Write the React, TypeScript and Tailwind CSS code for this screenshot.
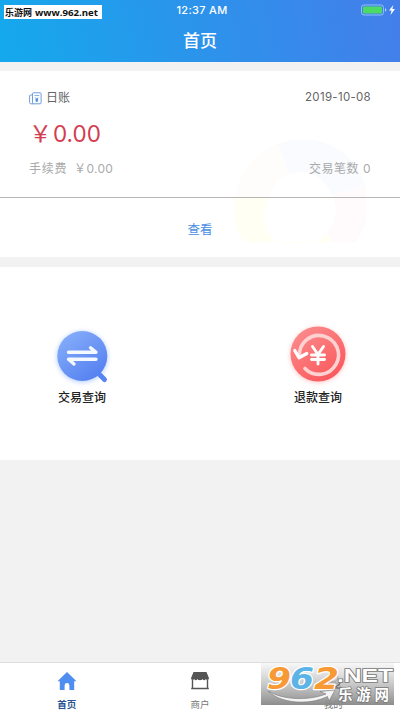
import type { ReactNode } from 'react';

function BatteryIcon() {
  return (
    <svg width="38" height="12" viewBox="0 0 38 12" fill="none">
      <rect x="1.5" y="1" width="22" height="10" rx="2.5" stroke="#a9d6fb" strokeOpacity="0.75" />
      <rect x="3" y="2.5" width="19" height="7" rx="1.2" fill="#4cd964" />
      <path d="M25 4.300v3.400c1-.4 1.300-1 1.300-1.700s-.3-1.300-1.300-1.700z" fill="#a9d6fb" />
      <path d="M33.300 1l-4.300 5.600h2.500l-1 4.400 4.500-5.900h-2.600z" fill="#fff" />
    </svg>
  );
}

function LedgerIcon() {
  return (
    <svg width="13" height="13" viewBox="0 0 13 13" fill="none" stroke="#6c9fdc">
      <rect x="3.500" y="0.800" width="8.600" height="11" rx="1" />
      <path d="M3.500 3H1.600a1 1 0 0 0-1 1v6.600c0 .8.500 1.200 1.200 1.200H5" />
      <path d="M5.500 3.500h4.800" strokeWidth="0.800" />
      <path d="M6.400 5.600l1.400 1.700 1.400-1.700M7.800 7.300v2.800M6.400 7.700h2.800M6.400 8.900h2.800" stroke="#3f80d0" strokeWidth="0.900" />
    </svg>
  );
}

function DonutBackdrop() {
  return (
    <svg className="absolute left-[234px] top-[69px]" width="132" height="103" viewBox="234 140 132 103">
      <path d="M278 144A65 65 0 0 1 365 185L332 196A33 33 0 0 0 289 174Z" fill="#f9fbff" />
      <path d="M365 185A65 65 0 0 1 356 242H333L327 233A32 32 0 0 0 332 196Z" fill="#fffbfc" />
      <path d="M333 242H244A65 65 0 0 1 235 197H269A32 32 0 0 0 327 233Z" fill="#fffff3" />
      <path d="M235 197A65 65 0 0 1 278 144L289 174A33 33 0 0 0 269 197Z" fill="#fffdfc" />
    </svg>
  );
}

function TradeIcon() {
  return (
    <svg width="64" height="64" viewBox="0 0 64 64" fill="none">
      <defs>
        <linearGradient id="trade" x1="14" y1="10" x2="48" y2="56" gradientUnits="userSpaceOnUse">
          <stop stopColor="#86adfa" />
          <stop offset="1" stopColor="#5480f0" />
        </linearGradient>
        <filter id="tradeGlow" x="-20%" y="-20%" width="140%" height="140%">
          <feGaussianBlur stdDeviation="2" />
        </filter>
      </defs>
      <circle cx="32.300" cy="34" r="26" fill="#8eb2ff" opacity="0.500" filter="url(#tradeGlow)" />
      <path d="M46 48l8.500 8.500" stroke="#5684f2" strokeWidth="5" strokeLinecap="round" />
      <circle cx="32.300" cy="33" r="25" fill="url(#trade)" />
      <g stroke="#f4f8ff" strokeWidth="3.400" strokeLinecap="round" strokeLinejoin="round">
        <path d="M18.500 29.300H46l-5.500-4.500" />
        <path d="M46 36.300H18.500l5.500 4.700" />
      </g>
    </svg>
  );
}

function RefundIcon() {
  return (
    <svg width="64" height="64" viewBox="0 0 64 64" fill="none">
      <defs>
        <linearGradient id="refund" x1="12" y1="8" x2="46" y2="58" gradientUnits="userSpaceOnUse">
          <stop stopColor="#fb8a8b" />
          <stop offset="1" stopColor="#fb585c" />
        </linearGradient>
        <filter id="refundGlow" x="-20%" y="-20%" width="140%" height="140%">
          <feGaussianBlur stdDeviation="2" />
        </filter>
      </defs>
      <circle cx="32" cy="32" r="28" fill="#ff9a9d" opacity="0.500" filter="url(#refundGlow)" />
      <circle cx="32" cy="31" r="27.500" fill="url(#refund)" />
      <path d="M13.500 33A19.500 19.500 0 1 1 19 45.500" stroke="#ffd2d2" strokeWidth="3.600" strokeLinecap="round" />
      <path d="M8.800 27.500l4.200 7.200 7.800-4.200" stroke="#fff" strokeWidth="3.300" strokeLinecap="round" strokeLinejoin="round" />
      <path d="M26.500 23.500l5.500 8 5.500-8M32 31.500v9.500M25.500 32h13M25.500 36.500h13" stroke="#fff" strokeWidth="2.900" strokeLinecap="round" strokeLinejoin="round" />
    </svg>
  );
}

function HomeIcon() {
  return (
    <svg width="20" height="20" viewBox="0 0 20 20" fill="#4f8df0">
      <path d="M10 1L0.500 10.300h2.300V19h4.800v-4.500a2.400 2.400 0 0 1 4.800 0V19h4.800v-8.700h2.300z" />
    </svg>
  );
}

function ShopIcon() {
  return (
    <svg width="20" height="20" viewBox="0 0 20 20" fill="none">
      <path d="M3.500 1h13l2.500 6.300c0 1.700-2.400 2.300-3.200.8-.7 1.600-2.500 1.600-3.200 0-.7 1.600-4.500 1.600-5.200 0-.7 1.600-2.500 1.600-3.200 0C3.400 9.600 1 9 1 7.300z" fill="#555" />
      <path d="M2.500 9v8.500M17.500 9v8.500M1.200 17.500h17.600" stroke="#555" strokeWidth="1.400" />
    </svg>
  );
}

function UserIcon() {
  return (
    <svg width="20" height="20" viewBox="0 0 20 20" fill="none" stroke="#666" strokeWidth="1.400">
      <circle cx="10" cy="6" r="4.800" />
      <path d="M2 19c0-5 3.500-7.500 8-7.500s8 2.500 8 7.500" />
    </svg>
  );
}

function SiteBadge() {
  return (
    <svg className="absolute top-[663px] left-[261px] overflow-visible" width="133" height="42" viewBox="0 0 133 42">
      <defs>
        <linearGradient id="badge" x1="0" y1="0" x2="0" y2="1">
          <stop stopColor="#f4f4f4" stopOpacity="0.700" />
          <stop offset="0.500" stopColor="#bbb" stopOpacity="0.800" />
          <stop offset="1" stopColor="#868686" stopOpacity="0.950" />
        </linearGradient>
      </defs>
      <rect width="133" height="42" fill="url(#badge)" />
      <path d="M67 20c1 4 9 6 12 0M70 26c6-2 11-1 14 3" fill="none" stroke="#666" strokeWidth="1.200" />
      <g fontFamily="'DejaVu Sans', sans-serif" fontWeight="700" fontStyle="italic" fontSize="31" stroke="#fff" strokeWidth="2.500" paintOrder="stroke" strokeLinejoin="round">
        <text x="6" y="25.500" textLength="24" lengthAdjust="spacingAndGlyphs" fill="#f79a35">9</text>
        <text x="29" y="25.500" textLength="24" lengthAdjust="spacingAndGlyphs" fill="#5cb3e6">6</text>
        <text x="53" y="25.500" textLength="25" lengthAdjust="spacingAndGlyphs" fill="#f79a35">2</text>
      </g>
      <path d="M7 28C22 37 47 38 65 31l-6-2.500 15-1.500-6 11-1.500-4.500C47 43 19 40 7 28z" fill="#f4f4f4" stroke="#777" strokeWidth="0.600" />
      <g fill="#fff" stroke="#777" strokeWidth="1.400" paintOrder="stroke" fontWeight="700">
        <text x="76" y="19" fontSize="17.500" textLength="56" lengthAdjust="spacingAndGlyphs" fontFamily="'Liberation Sans', Arial, sans-serif">.NET</text>
        <text x="77" y="37" fontSize="14.500" textLength="51" fontFamily="'Noto Sans CJK SC', sans-serif">乐游网</text>
      </g>
    </svg>
  );
}

function Action({ icon, label }: { icon: ReactNode; label: string }) {
  return (
    <div className="flex w-[100px] flex-col items-center">
      {icon}
      <span className="mt-[3px] text-[12px] leading-4 font-medium text-[#222]">{label}</span>
    </div>
  );
}

function Tab({ icon, label, active }: { icon: ReactNode; label: string; active?: boolean }) {
  return (
    <div className="flex flex-1 flex-col items-center pt-[8px]">
      {icon}
      <span className={active ? 'mt-[8px] text-[9.500px] leading-3 font-bold text-[#285393]' : 'mt-[8px] text-[9.500px] leading-3 text-[#777]'}>{label}</span>
    </div>
  );
}

export default function App() {
  return (
    <div className="relative flex h-[711px] w-[400px] flex-col overflow-hidden bg-[#f2f2f2] font-['Inter','Noto_Sans_CJK_SC',sans-serif]">
      <header className="h-[62px] shrink-0 bg-[linear-gradient(75deg,#14a9ec_0%,#2c93eb_50%,#447eea_100%)] text-white">
        <div className="relative flex h-5 items-center justify-center">
          <span className="pl-1 text-[11px] font-medium tracking-[0.300px]">12:37 AM</span>
          <div className="absolute top-1 right-[2px]"><BatteryIcon /></div>
        </div>
        <h1 className="text-center text-[17px] leading-[42px] font-medium">首页</h1>
      </header>

      <section className="relative mt-[9px] h-[186px] shrink-0 bg-white">
        <DonutBackdrop />
        <div className="relative flex h-[127px] flex-col border-b border-[#b9b5b5] px-[29px] pt-[19px]">
          <div className="flex h-4 items-center justify-between text-[#666]">
            <div className="flex items-center gap-1 text-[12px]">
              <LedgerIcon />
              <span>日账</span>
            </div>
            <span className="text-[11.500px] tracking-[0.300px]">2019-10-08</span>
          </div>
          <div className="mt-[14px] flex h-7 items-center text-[23px] text-[#d43d50]">
            <span className="-mt-[3px] w-6 font-['Noto_Sans_CJK_SC',sans-serif] text-[23px]">￥</span>
            <span className="text-[22.500px]">0.00</span>
          </div>
          <div className="mt-[13px] flex h-4 items-center justify-between text-[12px] text-[#aaa]">
            <div className="flex gap-[7px]">
              <span className="tracking-[0.700px]">手续费</span>
              <span className="tracking-[0.300px]">￥0.00</span>
            </div>
            <span className="tracking-[0.500px]">交易笔数 0</span>
          </div>
        </div>
        <button className="relative block h-[59px] w-full pt-[5px] text-[12.500px] text-[#4a90e2]">查看</button>
      </section>

      <section className="mt-[10px] flex h-[193px] shrink-0 justify-between bg-white px-[32px] pt-[56px]">
        <Action icon={<TradeIcon />} label="交易查询" />
        <Action icon={<RefundIcon />} label="退款查询" />
      </section>

      <nav className="mt-auto flex h-[49px] shrink-0 border-t border-[#dedede] bg-white">
        <Tab icon={<HomeIcon />} label="首页" active />
        <Tab icon={<ShopIcon />} label="商户" />
        <Tab icon={<UserIcon />} label="我的" />
      </nav>

      <div className="absolute top-[5px] left-[4px] h-[14px] w-[98px] bg-white">
        <svg className="block overflow-visible" width="98" height="14" fill="#111" fontWeight="700">
          <text x="1" y="11" fontSize="9" textLength="27" fontFamily="'Noto Sans CJK SC', sans-serif">乐游网</text>
          <text x="31" y="11" fontSize="9.500" textLength="63" lengthAdjust="spacingAndGlyphs" fontFamily="'Open Sans', sans-serif">www.962.net</text>
        </svg>
      </div>
      <SiteBadge />
    </div>
  );
}
